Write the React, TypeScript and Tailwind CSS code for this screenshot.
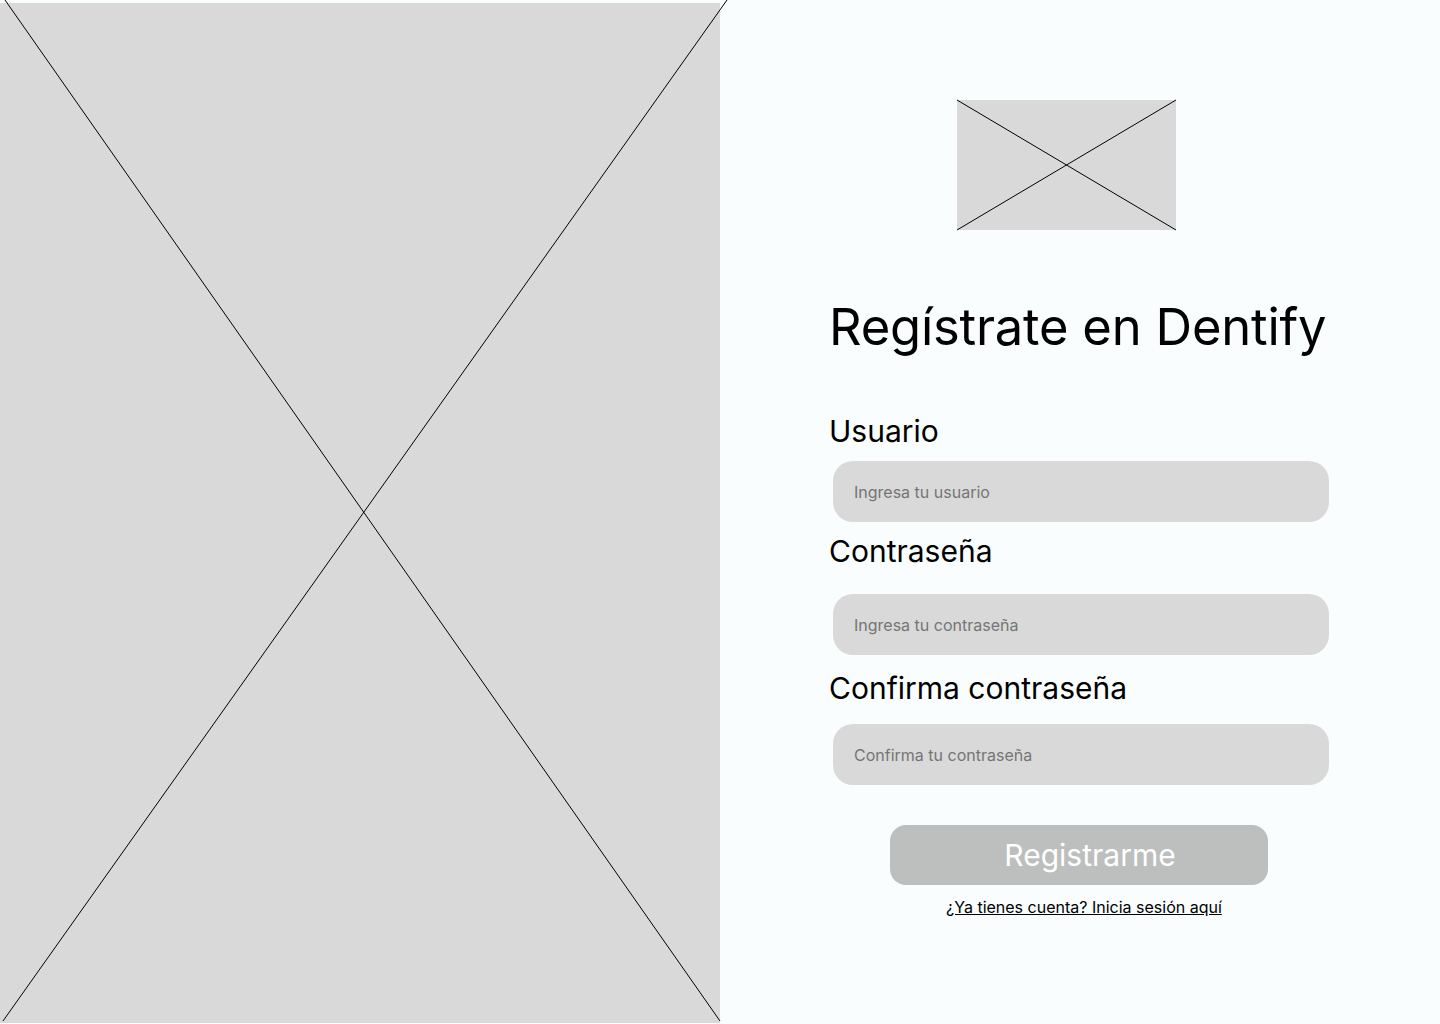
import React from 'react';

const Placeholder: React.FC<{ className?: string }> = ({ className }) => (
  <div className={`relative bg-[#d9d9d9] ${className ?? ''}`}>
    <svg
      className="absolute inset-0 h-full w-full overflow-visible"
      viewBox="0 0 100 100"
      preserveAspectRatio="none"
    >
      <line x1="0" y1="0" x2="100" y2="100" stroke="#000" strokeWidth="1" vectorEffect="non-scaling-stroke" />
      <line x1="100" y1="0" x2="0" y2="100" stroke="#000" strokeWidth="1" vectorEffect="non-scaling-stroke" />
    </svg>
  </div>
);

const fields = [
  { label: 'Usuario', placeholder: 'Ingresa tu usuario', type: 'text', labelGap: '', inputGap: 'mt-[13px]' },
  { label: 'Contraseña', placeholder: 'Ingresa tu contraseña', type: 'password', labelGap: 'mt-[12px]', inputGap: 'mt-[26px]' },
  { label: 'Confirma contraseña', placeholder: 'Confirma tu contraseña', type: 'password', labelGap: 'mt-[16px]', inputGap: 'mt-[19px]' },
];

export default function App() {
  return (
    <div className="flex h-[1024px] w-[1440px] bg-[#f9fdfd] font-['Inter',sans-serif] text-black">
      {/* left hero image */}
      <div className="relative mt-[3px] mb-[1px] w-[720px] bg-[#d9d9d9]">
        <svg className="absolute inset-0 h-full w-full overflow-visible" viewBox="0 0 720 1020">
          <line x1="5" y1="-3" x2="720" y2="1018" stroke="#000" strokeWidth="1" />
          <line x1="727" y1="-3" x2="3" y2="1018" stroke="#000" strokeWidth="1" />
        </svg>
      </div>

      <div className="flex flex-1 flex-col pl-[109px] pt-[100px]">
        <Placeholder className="ml-[128px] h-[130px] w-[219px]" />

        <h1 className="mt-[67px] text-[50.7px] leading-[60px] tracking-[-0.2px]">Regístrate en Dentify</h1>

        <form className="mt-[57px] flex w-[500px] flex-col">
          {fields.map((f) => (
            <div key={f.label} className={f.labelGap}>
              <label className="block text-[30px] leading-[34px]">{f.label}</label>
              <input
                type={f.type}
                placeholder={f.placeholder}
                className={`ml-[4px] h-[61px] w-[496px] rounded-[20px] bg-[#d9d9d9] px-[21px] text-base outline-none placeholder:text-[#757575] ${f.inputGap}`}
              />
            </div>
          ))}

          <button
            type="button"
            className="ml-[61px] mt-[40px] h-[60px] w-[378px] rounded-[16px] bg-[#bdbebe] pl-[22px] text-[30px] text-white"
          >
            Registrarme
          </button>
          <a href="#" className="ml-[117px] mt-[10px] self-start text-base underline">
            ¿Ya tienes cuenta? Inicia sesión aquí
          </a>
        </form>
      </div>
    </div>
  );
}
